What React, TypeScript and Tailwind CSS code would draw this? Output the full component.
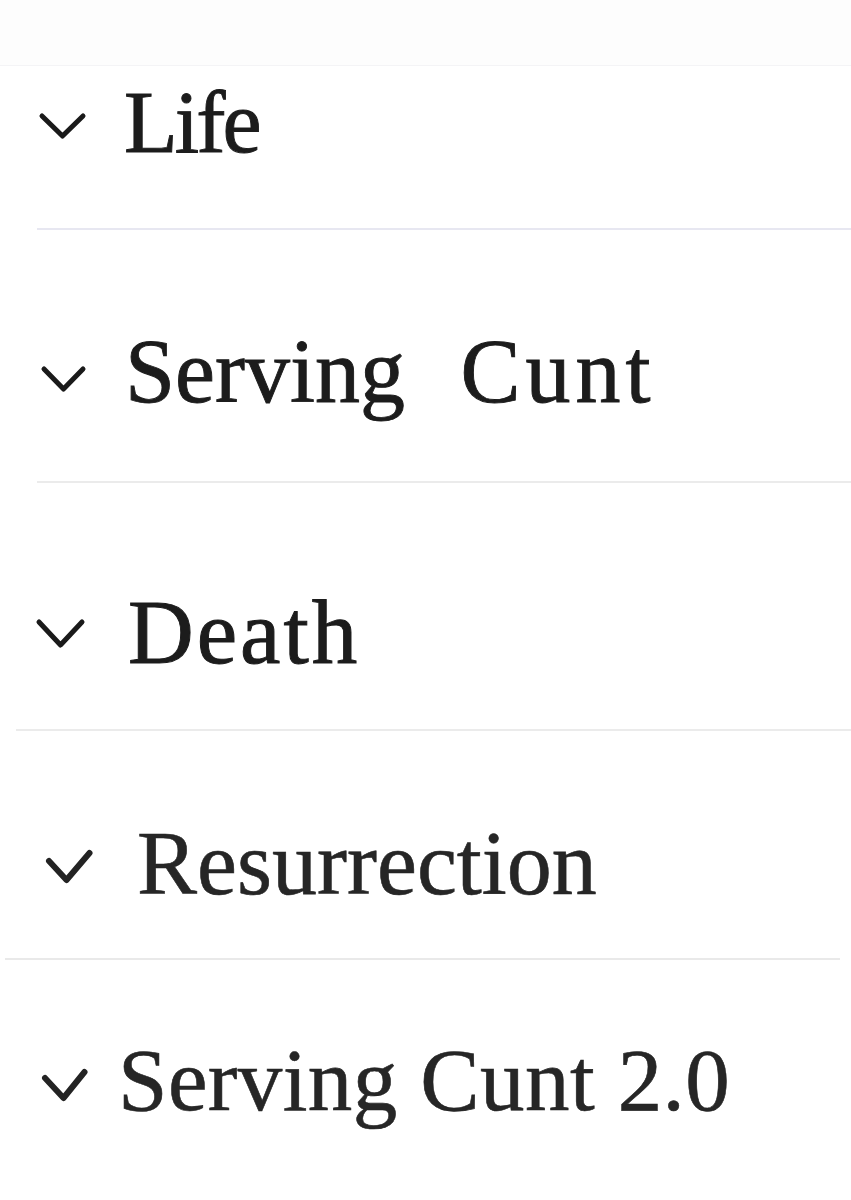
import React from "react";

type ChevProps = { w: number; h: number; pts: string; sw: number; color?: string };

function Chevron({ w, h, pts, sw, color = "#1a1a1a" }: ChevProps) {
  return (
    <svg width={w} height={h} viewBox={`0 0 ${w} ${h}`} fill="none" className="shrink-0">
      <polyline points={pts} stroke={color} strokeWidth={sw} strokeLinecap="round" strokeLinejoin="round" />
    </svg>
  );
}

const serif = { fontFamily: '"Liberation Serif", "Times New Roman", serif' };

export default function App() {
  return (
    <div className="w-[851px] h-[1200px] bg-white overflow-hidden" style={serif}>
      <div className="h-[65px] bg-[#fdfdfd]" />
      <div className="h-px bg-[#f4f4f6]" />

      {/* Row 1: Life */}
      <div className="mt-[13px] flex items-start pl-[38px]">
        <div className="mt-[33px]">
          <Chevron w={49} h={28} sw={5} pts="4,4 24.5,24 45,4" />
        </div>
        <div className="ml-[37px] text-[88px] leading-none text-[#1c1c1c] tracking-[-3px] [-webkit-text-stroke:0.9px_#1c1c1c]">
          Life
        </div>
      </div>
      <div className="mt-[61px] ml-[37px] h-[2px] bg-[#e7e7f1]" />

      {/* Row 2: Serving Cunt */}
      <div className="mt-[97px] flex items-start pl-[40px]">
        <div className="mt-[38px]">
          <Chevron w={47} h={28} sw={5} pts="4,4 23.5,24 43,4" />
        </div>
        <div className="ml-[38px] text-[90px] leading-none text-[#1c1c1c] [word-spacing:33px] [-webkit-text-stroke:0.9px_#1c1c1c]">
          Serving <span className="tracking-[5px]">Cunt</span>
        </div>
      </div>
      <div className="mt-[64px] ml-[37px] h-[2px] bg-[#ebebeb]" />

      {/* Row 3: Death */}
      <div className="mt-[104px] flex items-start pl-[35px]">
        <div className="mt-[31px]">
          <Chevron w={51} h={31} sw={5} pts="4,4 25.5,27 47,4" />
        </div>
        <div className="ml-[42px] text-[91px] leading-none text-[#1c1c1c] tracking-[3px] [-webkit-text-stroke:1px_#1c1c1c]">
          Death
        </div>
      </div>
      <div className="mt-[51px] ml-[16px] h-[2px] bg-[#ebebeb]" />

      {/* Row 4: Resurrection */}
      <div className="mt-[88px] flex items-start pl-[45px]">
        <div className="mt-[30px]">
          <Chevron w={48} h={35} sw={6} pts="4,12 21.5,31 44.5,4" color="#232323" />
        </div>
        <div className="ml-[44px] text-[90px] leading-none text-[#262626] [-webkit-text-stroke:0.6px_#262626]">
          Resurrection
        </div>
      </div>
      <div className="mt-[49px] ml-[5px] mr-[11px] h-[2px] bg-[#e9e9e9]" />

      {/* Row 5: Serving Cunt 2.0 */}
      <div className="mt-[76px] flex items-start pl-[41px]">
        <div className="mt-[32px]">
          <Chevron w={47} h={34} sw={6} pts="4,10 22.5,30 43.5,4" color="#232323" />
        </div>
        <div className="ml-[30px] text-[89px] leading-none text-[#262626] tracking-[0.4px] [-webkit-text-stroke:0.6px_#262626]">
          Serving Cunt 2.0
        </div>
      </div>
    </div>
  );
}
